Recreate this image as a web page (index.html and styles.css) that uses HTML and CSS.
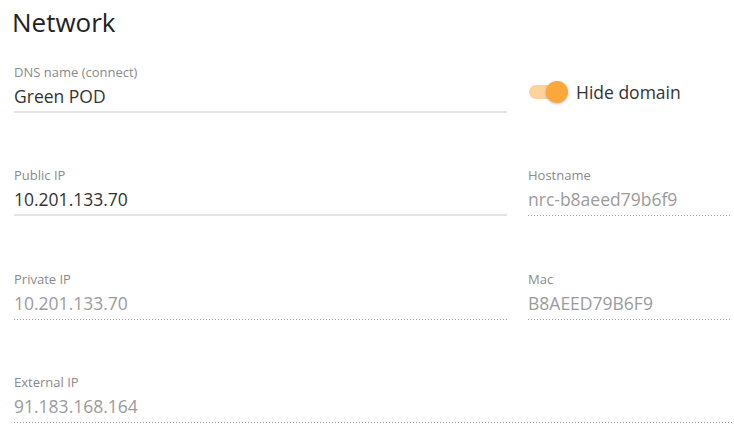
FILE: index.html
```html
<!DOCTYPE html>
<html>
<head>
<meta charset="utf-8">
<link rel="stylesheet" href="styles.css">
</head>
<body>
<div class="panel">
  <h1 class="title">Network</h1>
  <div class="grid">
    <div class="field">
      <div class="label">DNS name (connect)</div>
      <div class="value edit">Green POD</div>
    </div>
    <div class="toggle-cell">
      <span class="switch"><span class="track"></span><span class="knob"></span></span>
      <span class="toggle-label">Hide domain</span>
    </div>

    <div class="field">
      <div class="label">Public IP</div>
      <div class="value edit">10.201.133.70</div>
    </div>
    <div class="field">
      <div class="label">Hostname</div>
      <div class="value ro">nrc-b8aeed79b6f9</div>
    </div>

    <div class="field">
      <div class="label">Private IP</div>
      <div class="value ro">10.201.133.70</div>
    </div>
    <div class="field">
      <div class="label">Mac</div>
      <div class="value ro">B8AEED79B6F9</div>
    </div>

    <div class="field wide">
      <div class="label">External IP</div>
      <div class="value ro">91.183.168.164</div>
    </div>
  </div>
</div>
</body>
</html>
```
FILE: styles.css
```css
html, body {
  margin: 0;
  padding: 0;
  background: #fff;
}
body {
  font-family: "Open Sans", "Noto Sans", sans-serif;
  color: #333;
}
.panel {
  padding: 4px 2px 0 14px;
}
.title {
  margin: 0 0 0 -2px;
  font-size: 26px;
  font-weight: 400;
  line-height: 36px;
  color: #222;
}
.grid {
  display: grid;
  grid-template-columns: 493px 204px;
  column-gap: 21px;
  row-gap: 54.4px;
  margin-top: 24px;
}
.field {
  display: flex;
  flex-direction: column;
}
.field.wide {
  grid-column: 1 / span 2;
}
.label {
  font-size: 13px;
  line-height: 17px;
  color: #8a8a8a;
}
.value {
  font-size: 17.5px;
  line-height: 24px;
  padding-top: 3px;
  padding-bottom: 3px;
}
.value.edit {
  color: #333;
  border-bottom: 2px solid #e4e4e4;
}
.value.ro {
  color: #9b9b9b;
  padding-bottom: 5px;
  background-image: linear-gradient(to right, #9c9c9c 1px, transparent 1px);
  background-size: 3px 1px;
  background-repeat: repeat-x;
  background-position: left bottom;
}
.toggle-cell {
  display: flex;
  align-items: center;
  gap: 7px;
  padding-top: 6px;
  padding-left: 1px;
}
.switch {
  position: relative;
  width: 40px;
  height: 22px;
  display: inline-block;
}
.track {
  position: absolute;
  left: 0;
  top: 4px;
  width: 36px;
  height: 14px;
  border-radius: 7px;
  background: #fdd39c;
}
.knob {
  position: absolute;
  left: 17px;
  top: 0;
  width: 22px;
  height: 22px;
  border-radius: 50%;
  background: #fba73c;
  box-shadow: 0 1px 3px rgba(0,0,0,0.25);
}
.toggle-label {
  font-size: 17.5px;
  color: #333;
}
```
